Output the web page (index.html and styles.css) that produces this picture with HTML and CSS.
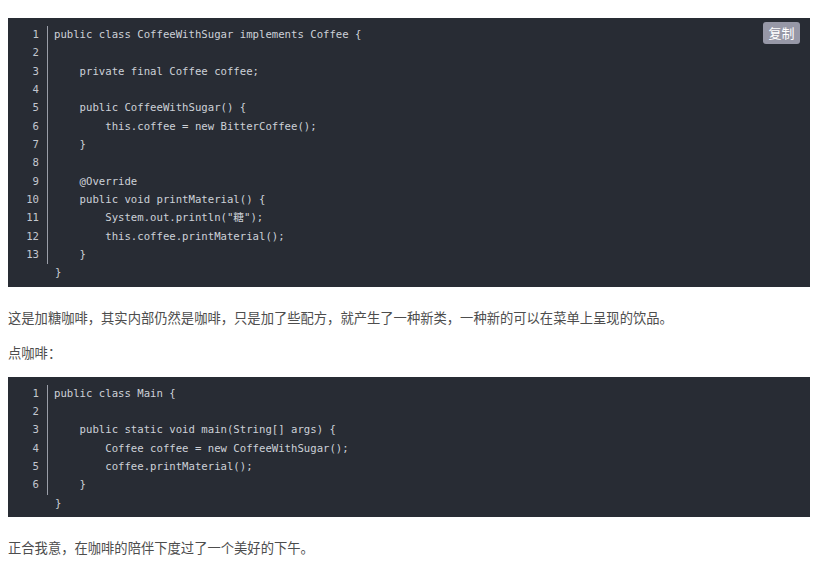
FILE: index.html
```html
<!DOCTYPE html>
<html lang="zh-CN">
<head>
<meta charset="utf-8">
<title>Coffee</title>
<link rel="stylesheet" href="styles.css">
</head>
<body>
<main class="article">
  <div class="code-block">
    <button class="copy-btn">复制</button>
    <div class="lines">
      <div class="row"><span class="ln">1</span><span class="src">public class CoffeeWithSugar implements Coffee {</span></div>
      <div class="row"><span class="ln">2</span><span class="src"> </span></div>
      <div class="row"><span class="ln">3</span><span class="src">    private final Coffee coffee;</span></div>
      <div class="row"><span class="ln">4</span><span class="src"> </span></div>
      <div class="row"><span class="ln">5</span><span class="src">    public CoffeeWithSugar() {</span></div>
      <div class="row"><span class="ln">6</span><span class="src">        this.coffee = new BitterCoffee();</span></div>
      <div class="row"><span class="ln">7</span><span class="src">    }</span></div>
      <div class="row"><span class="ln">8</span><span class="src"> </span></div>
      <div class="row"><span class="ln">9</span><span class="src">    @Override</span></div>
      <div class="row"><span class="ln">10</span><span class="src">    public void printMaterial() {</span></div>
      <div class="row"><span class="ln">11</span><span class="src">        System.out.println("糖");</span></div>
      <div class="row"><span class="ln">12</span><span class="src">        this.coffee.printMaterial();</span></div>
      <div class="row"><span class="ln">13</span><span class="src">    }</span></div>
    </div>
    <div class="tail">}</div>
  </div>

  <p class="para">这是加糖咖啡，其实内部仍然是咖啡，只是加了些配方，就产生了一种新类，一种新的可以在菜单上呈现的饮品。</p>
  <p class="para">点咖啡：</p>

  <div class="code-block">
    <div class="lines">
      <div class="row"><span class="ln">1</span><span class="src">public class Main {</span></div>
      <div class="row"><span class="ln">2</span><span class="src"> </span></div>
      <div class="row"><span class="ln">3</span><span class="src">    public static void main(String[] args) {</span></div>
      <div class="row"><span class="ln">4</span><span class="src">        Coffee coffee = new CoffeeWithSugar();</span></div>
      <div class="row"><span class="ln">5</span><span class="src">        coffee.printMaterial();</span></div>
      <div class="row"><span class="ln">6</span><span class="src">    }</span></div>
    </div>
    <div class="tail">}</div>
  </div>

  <p class="para">正合我意，在咖啡的陪伴下度过了一个美好的下午。</p>
</main>
</body>
</html>
```
FILE: styles.css
```css
html, body {
  margin: 0;
  padding: 0;
  background: #ffffff;
}

.article {
  padding: 18px 14px 0 8px;
  font-family: "Noto Sans CJK SC", "Liberation Sans", sans-serif;
  color: #4d4d4d;
}

.code-block {
  position: relative;
  background: #282c34;
  padding: 8px 0 4px 0;
  margin: 13px 0 20px 0;
  font-family: "DejaVu Sans Mono", "Noto Sans CJK SC", monospace;
  font-size: 10.65px;
  line-height: 18.33px;
  color: #cdd1d8;
}

.article > .code-block:first-child {
  margin-top: 0;
}

.lines {
  display: flex;
  flex-direction: column;
}

.row {
  display: flex;
}

.ln {
  flex: 0 0 40px;
  box-sizing: border-box;
  padding-right: 8px;
  text-align: right;
  border-right: 1px solid #9a9ea8;
  color: #c3c7cf;
}

.src {
  padding-left: 6px;
  white-space: pre;
}

.tail {
  padding-left: 47px;
  white-space: pre;
}

.copy-btn {
  position: absolute;
  top: 4px;
  right: 10px;
  width: 37px;
  height: 22px;
  padding: 0;
  border: none;
  border-radius: 3px;
  background: #9798a7;
  color: #ffffff;
  font-family: "Noto Sans CJK SC", sans-serif;
  font-size: 13px;
  line-height: 22px;
  text-align: center;
}

.para {
  margin: 13px 0;
  font-size: 13.3px;
  line-height: 22px;
}
```
